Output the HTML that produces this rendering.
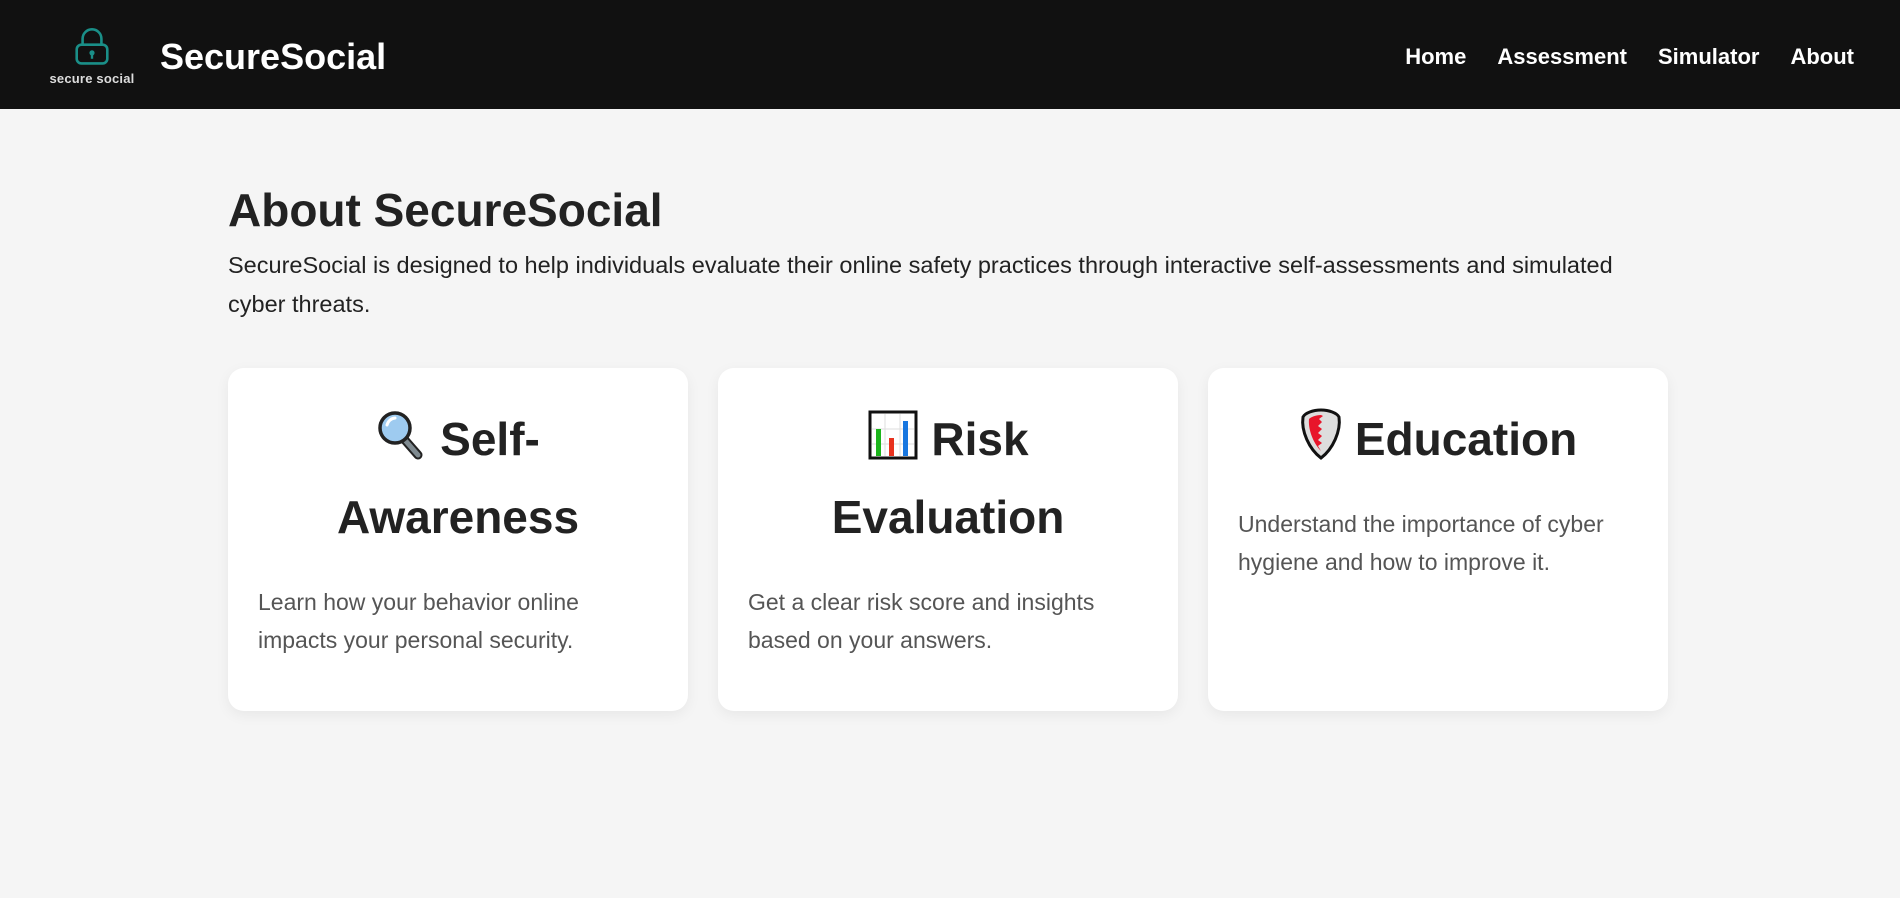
<!DOCTYPE html>
<html><head><meta charset="utf-8"><style>
*{margin:0;padding:0;box-sizing:border-box}
body{width:1900px;height:898px;background:#f5f5f5;font-family:"Liberation Sans",sans-serif;color:#222;overflow:hidden}
header{height:109px;background:#111;position:relative}
.logo{position:absolute;left:46px;top:28px;width:92px;text-align:center}
.logo .t{color:#ddd;font-size:13px;font-weight:bold;margin-top:0px;letter-spacing:.2px}
.brand{position:absolute;left:160px;top:35px;color:#fff;font-weight:bold;font-size:36px;line-height:44px}
nav{position:absolute;right:46px;top:43px;display:flex;gap:31px}
nav a{color:#fff;text-decoration:none;font-weight:bold;font-size:22px;line-height:28px}
main{position:absolute;left:228px;top:180px;width:1441px}
h1{font-size:46px;line-height:60px;font-weight:bold;color:#222}
p.lead{font-size:23.5px;line-height:39px;color:#222;margin-top:6px}
.cards{position:absolute;top:188px;left:0;display:flex;gap:30px}
.card{width:460px;height:343px;background:#fff;border-radius:16px;box-shadow:0 4px 14px rgba(0,0,0,.06);padding:32px 30px}
.card h2{font-size:46px;line-height:78px;text-align:center;font-weight:bold;color:#222}
.card h2 svg{vertical-align:-6px;margin-right:12px}
.card p{font-size:23px;line-height:38px;color:#555;margin-top:27px}
</style></head><body>
<header>
<div class="logo">
<svg width="40" height="38" viewBox="0 0 34 32"><path d="M9 14V9a8 8 0 0 1 16 0v5" fill="none" stroke="#1a8f88" stroke-width="2.2"/><rect x="4" y="14" width="26" height="16" rx="4" fill="none" stroke="#1a8f88" stroke-width="2.2"/><circle cx="17" cy="21" r="2.2" fill="#1a8f88"/><rect x="16" y="21" width="2" height="5" fill="#1a8f88"/></svg>
<div class="t">secure social</div></div>
<div class="brand">SecureSocial</div>
<nav><a>Home</a><a>Assessment</a><a>Simulator</a><a>About</a></nav>
</header>
<main>
<h1>About SecureSocial</h1>
<p class="lead">SecureSocial is designed to help individuals evaluate their online safety practices through interactive self-assessments and simulated cyber threats.</p>
<div class="cards">
<div class="card"><h2><svg width="52" height="52" viewBox="0 0 52 52"><path d="M28 30l14 16" stroke="#222" stroke-width="9" stroke-linecap="round"/><path d="M28 30l14 16" stroke="#7f8a90" stroke-width="5" stroke-linecap="round"/><circle cx="19" cy="19" r="15" fill="#9ecbf0" stroke="#222" stroke-width="3.5"/><path d="M11 16a9 9 0 0 1 8-7" stroke="#fff" stroke-width="3" fill="none" stroke-linecap="round"/></svg>Self-<br>Awareness</h2>
<p>Learn how your behavior online impacts your personal security.</p></div>
<div class="card"><h2><svg width="52" height="52" viewBox="0 0 52 52"><rect x="3" y="3" width="46" height="46" fill="#fff" stroke="#111" stroke-width="3"/><path d="M18 5v42M33 5v42M5 20h42M5 35h42" stroke="#ddd" stroke-width="1"/><rect x="9" y="20" width="5" height="27" fill="#1cb51c"/><rect x="22" y="29" width="5" height="18" fill="#e8321e"/><rect x="36" y="12" width="5" height="35" fill="#1877e0"/></svg>Risk<br>Evaluation</h2>
<p>Get a clear risk score and insights based on your answers.</p></div>
<div class="card"><h2><svg width="44" height="54" viewBox="0 0 44 54"><path d="M22 3C14 3 6 6 4 10c-2 14 6 32 18 41 12-9 20-27 18-41-2-4-10-7-18-7z" fill="#ddd" stroke="#111" stroke-width="3"/><path d="M22 8c-5 0-10 2-12 4-1 10 4 24 12 32l-3-5 4-3-4-3 4-4-4-3 4-4-4-3 4-4-3-3 4-3z" fill="#e8152a"/></svg>Education</h2>
<p>Understand the importance of cyber hygiene and how to improve it.</p></div>
</div>
</main>
</body></html>
